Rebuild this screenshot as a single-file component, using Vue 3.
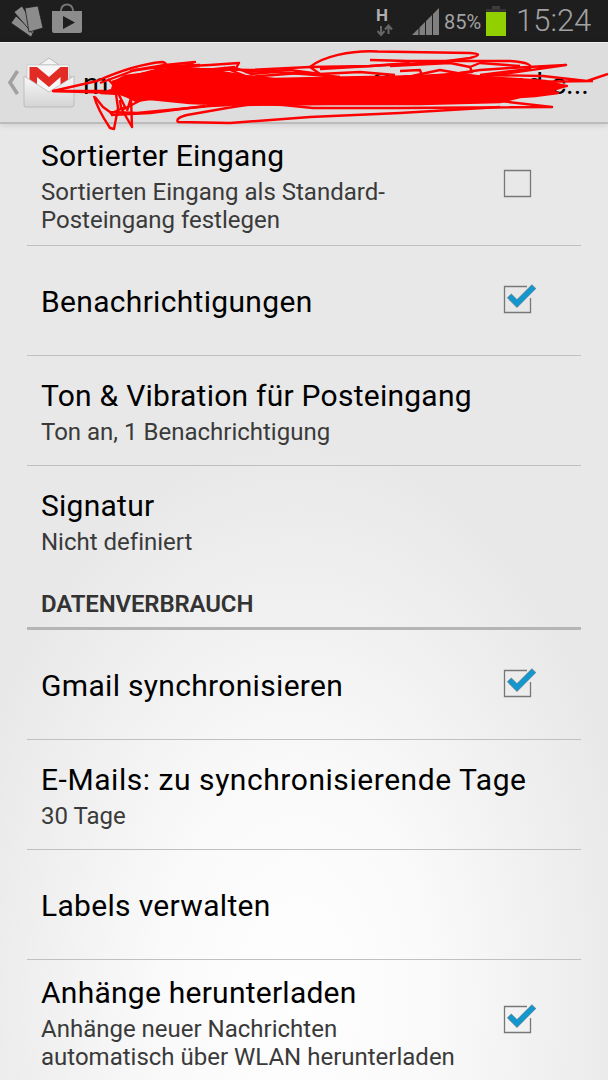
<template>
  <div class="screen">
    <header class="status-bar">
      <svg class="notify-icons" width="90" height="42" viewBox="0 0 90 42">
        <g fill="#8c8c8c" stroke="#1e1e1e" stroke-width="0.8">
          <path d="M16 16 L11 23 L31 37 L34 32 Z" />
          <path d="M14 12 L22 6 L35 27 L33 34 Z" />
          <path d="M25 8 L38 6 L43 28 L29 32 Z" />
        </g>
        <path d="M61 13 V10 Q62 4.500 67 4.500 Q72 4.500 73 10 V13" fill="none" stroke="#777" stroke-width="1.800" />
        <path d="M52 11 H82 V31 Q82 33 80 33 H54 Q52 33 52 31 Z" fill="#8c8c8c" />
        <path d="M63 16 L75 22.500 L63 29 Z" fill="#1e1e1e" />
      </svg>
      <div class="status-right">
        <div class="network">
          <span class="network-type">H</span>
          <svg width="18" height="13" viewBox="0 0 18 13">
            <path d="M5 2 V10 M1.500 7 L5 11 L8.500 7 M12.500 10 V3 M9 5.500 L12.500 1.500 L16 5.500" fill="none" stroke="#666" stroke-width="2" />
          </svg>
        </div>
        <svg class="signal" width="28" height="28" viewBox="0 0 28 28">
          <path d="M0 27 L6.500 20.500 V27 Z M7.500 27 V19.500 L13 14 V27 Z M14 27 V13 L20 7 V27 Z M21 27 V6 L27 0 V27 Z" fill="#808080" />
        </svg>
        <span class="percent">85%</span>
        <svg class="battery" width="20" height="30" viewBox="0 0 20 30">
          <rect x="6" y="0" width="8" height="4" fill="#3c3c3c" />
          <rect x="0" y="3" width="20" height="3" fill="#333" />
          <rect x="0" y="6" width="20" height="24" fill="#92d000" />
        </svg>
        <span class="clock">15:24</span>
      </div>
    </header>

    <div class="action-bar">
      <svg class="back" width="13" height="26" viewBox="0 0 13 26">
        <path d="M10.500 1 L3 12.500 L10.500 24" fill="none" stroke="#a0a0a0" stroke-width="3.600" />
      </svg>
      <svg class="gmail" width="52" height="52" viewBox="0 0 52 52">
        <defs>
          <linearGradient id="paper" x1="0" y1="0" x2="0" y2="1">
            <stop offset="0" stop-color="#f8f8f8" />
            <stop offset="1" stop-color="#d4d4d4" />
          </linearGradient>
        </defs>
        <path d="M1 21 L5 17 H46 L51 21 V24 H1 Z" fill="#d0d0d0" />
        <path d="M16 8 L26 1 L36 8 Z" fill="#f4f4f4" stroke="#bbb" stroke-width="1" />
        <path d="M4 8 H46 V38 H4 Z" fill="#f7f7f7" stroke="#c2c2c2" stroke-width="0.700" />
        <path d="M6.500 10 H14 L26 20 L37.500 10 H45 V36 H37.500 V20 L26 30 L14 20 V36 H6.500 Z" fill="#e32b26" />
        <path d="M1 19 L26 35 L51 19 V48 Q51 50 49 50 H3 Q1 50 1 48 Z" fill="url(#paper)" stroke="#b5b5b5" stroke-width="0.800" />
      </svg>
      <div class="account">
        <span>m</span>
        <span class="account-at">@</span>
        <span class="account-end">nd.c...</span>
      </div>
    </div>

    <svg class="scribble" width="608" height="140" viewBox="0 0 608 140">
      <path class="blot" :d="blot" />
      <path v-for="(d, i) in strokes" :key="i" :d="d" />
    </svg>

    <main class="settings">
      <template v-for="item in items" :key="item.title">
        <h2 v-if="item.section" class="section">{{ item.title }}</h2>
        <div v-else class="row" :class="item.kind" @click="toggle(item)">
          <div class="texts">
            <div class="title">{{ item.title }}</div>
            <div v-for="line in item.summary" :key="line" class="summary">{{ line }}</div>
          </div>
          <svg v-if="'checked' in item" class="checkbox" width="36" height="34" viewBox="0 0 36 34">
            <path v-if="!item.checked" d="M2.500 3.500 H28.500 V29.500 H2.500 Z" fill="none" stroke="#777" stroke-width="1.300" />
            <template v-else>
              <path d="M25 3.500 H2.500 V29.500 H28.500 V15" fill="none" stroke="#777" stroke-width="1.300" />
              <path d="M7.100 12.600 L15 20.500 L32.100 3.400" fill="none" stroke="#8a8a8a" stroke-width="6.200" />
              <path d="M7.500 13 L15 20.500 L31.700 3.800" fill="none" stroke="#1497cc" stroke-width="5.200" />
            </template>
          </svg>
        </div>
      </template>
    </main>
  </div>
</template>

<script setup>
import { ref } from 'vue'

const items = ref([
  { title: 'Sortierter Eingang', summary: ['Sortierten Eingang als Standard-', 'Posteingang festlegen'], checked: false, kind: 'first' },
  { title: 'Benachrichtigungen', checked: true, kind: 'single' },
  { title: 'Ton & Vibration für Posteingang', summary: ['Ton an, 1 Benachrichtigung'] },
  { title: 'Signatur', summary: ['Nicht definiert'], kind: 'last' },
  { title: 'DATENVERBRAUCH', section: true },
  { title: 'Gmail synchronisieren', checked: true, kind: 'single' },
  { title: 'E-Mails: zu synchronisierende Tage', summary: ['30 Tage'], kind: 'wide' },
  { title: 'Labels verwalten', kind: 'single' },
  { title: 'Anhänge herunterladen', summary: ['Anhänge neuer Nachrichten', 'automatisch über WLAN herunterladen'], checked: true, kind: 'tall' }
])

const blot = 'M101 93 L112 90 L114 82 L125 76 L150 73 L180 68 L215 71 L245 76 L275 79 L320 78 L370 77 L400 77 L440 75 L475 76 L500 78 L545 81 L565 86 L550 91 L558 93 L535 96 L520 97 L500 102 L420 104 L330 104 L240 105 L190 103 L150 99 L136 101 L128 97 L120 94 Z'

const strokes = [
  // left tip and upper left
  'M120 93 L53 91 L97 81 C115 73 140 64 162 62 Q171 64 160 69 L112 82',
  'M100 83 L135 70 L165 65 L195 62 L180 68 L130 77',
  'M53 91 L104 91 M108 79 L118 90 M150 68 L210 65 L239 63 L236 68 L205 73',
  'M160 66 L200 69 L250 70 L310 67 L370 66 L410 63',
  'M236 68 L251 74 L275 72 L330 76',
  'M130 71 L165 66 L200 65 M125 78 L160 70 L190 67 M205 70 L235 67',
  'M200 76 L225 68 L248 77 L300 73 L340 77',
  'M245 72 L290 70 L320 74 L360 72 L395 75',
  // upper right loops
  'M320 74 L310 67 C322 57 350 50 378 51.500 L470 53 Q486 54 470 58 L440 62 L320 69',
  'M370 60 L408 61 L510 61 Q536 63 529 69 L480 75',
  'M390 66 L450 63 L470 67 L472 72 L430 76 M400 71 L420 70 L422 76',
  'M470 67 L480 63 L520 66 M440 76 L480 70 L510 68 L566 65 L497 75',
  'M608 74 L587 81 L543 76 L485 75 M593 81 L520 82 L567 86 L530 89',
  'M395 77 L412 76 L440 70 L480 77',
  // lower edge
  'M500 101 L552 107 L400 108 L313 108 L283 105 L240 103',
  'M500 107 L400 113 L310 117 L230 123 L178 122 Q175 118 187 115 L227 108 L260 103',
  // hooks under the name
  'M95 97 L103 107 L110 112 L137 113 L210 106 L230 105',
  'M94 96 C97 108 104 119 110 128 L114 129 L118 108 L116 94 M118 93 L125 107 L110 114',
  'M111 115 L150 113 L205 106 M122 110 L145 98',
  'M120 100 L121 108 L132 127 L131 98 M131 98 L127 111'
]

function toggle(item) {
  if ('checked' in item) item.checked = !item.checked
}
</script>

<style>
body {
  margin: 0;
}
</style>

<style scoped>
.screen {
  position: relative;
  width: 608px;
  height: 1080px;
  overflow: hidden;
  font-family: Roboto, "Liberation Sans", sans-serif;
  font-variant-ligatures: none;
  color: #000;
  background: radial-gradient(ellipse 350px 560px at 296px 1000px, #fefefe 0%, #fafafa 38%, #e8e8e8 100%);
}
.status-bar {
  height: 42px;
  background: #1e1e1e;
  display: flex;
  justify-content: space-between;
}
.status-right {
  display: flex;
  align-items: flex-start;
  color: #a2a2a2;
}
.network {
  width: 18px;
  margin: 6px 18px 0 0;
  display: flex;
  flex-direction: column;
}
.network-type {
  font-size: 17px;
  line-height: 18px;
  font-weight: 700;
  color: #b0b0b0;
}
.signal {
  margin: 8px 4px 0 0;
}
.percent {
  width: 42px;
  font-size: 20px;
  line-height: 44px;
  white-space: nowrap;
}
.battery {
  margin-top: 6px;
}
.clock {
  width: 102px;
  box-sizing: border-box;
  padding-left: 10px;
  font-size: 31px;
  font-weight: 300;
  line-height: 42px;
  white-space: nowrap;
}
.action-bar {
  height: 82px;
  box-sizing: border-box;
  display: flex;
  align-items: center;
  padding-left: 7px;
  background: #dddddd;
  border-top: 1px solid #f0f0f0;
  border-bottom: 2px solid #bcbcbc;
  box-shadow: 0 1px 6px rgba(0, 0, 0, 0.12);
}
.gmail {
  margin-left: 3px;
}
.account {
  display: flex;
  flex: 1;
  padding: 2px 0 0 8px;
  font-size: 29px;
}
.account-at {
  margin-left: 260px;
}
.account-end {
  margin-left: auto;
  padding-right: 19px;
}
.scribble {
  position: absolute;
  left: 0;
  top: 0;
  fill: none;
  stroke: #f00;
  stroke-width: 2.4;
  stroke-linejoin: round;
}
.blot {
  fill: #f00;
}
.settings {
  padding: 0 27px;
}
.row {
  height: 110px;
  box-sizing: border-box;
  display: flex;
  align-items: center;
  justify-content: space-between;
  padding: 0 43px 1px 14px;
  border-bottom: 1px solid #c0c0c0;
}
.row.first {
  height: 122px;
}
.row.last {
  border-bottom-color: transparent;
}
.row.tall {
  height: 122px;
}
.texts {
  padding-top: 3px;
  white-space: nowrap;
}
.single .texts {
  padding-top: 7px;
}
.first .texts {
  padding-top: 4px;
}
.tall .texts {
  padding-top: 5px;
}
.title {
  font-size: 30px;
  line-height: 35px;
  margin-bottom: 5px;
  letter-spacing: 0.25px;
}
.single .title {
  letter-spacing: 0.32px;
}
.first .title {
  letter-spacing: 0.15px;
}
.wide .title {
  letter-spacing: 0.55px;
}
.summary {
  font-size: 24px;
  line-height: 28px;
  color: #3a3a3a;
}
.section {
  margin: 0;
  height: 54px;
  box-sizing: border-box;
  padding: 12px 14px 0;
  border-bottom: 3px solid #b5b5b5;
  font-size: 24px;
  line-height: 32px;
  font-weight: 600;
  letter-spacing: -0.15px;
  color: #333;
}
</style>
